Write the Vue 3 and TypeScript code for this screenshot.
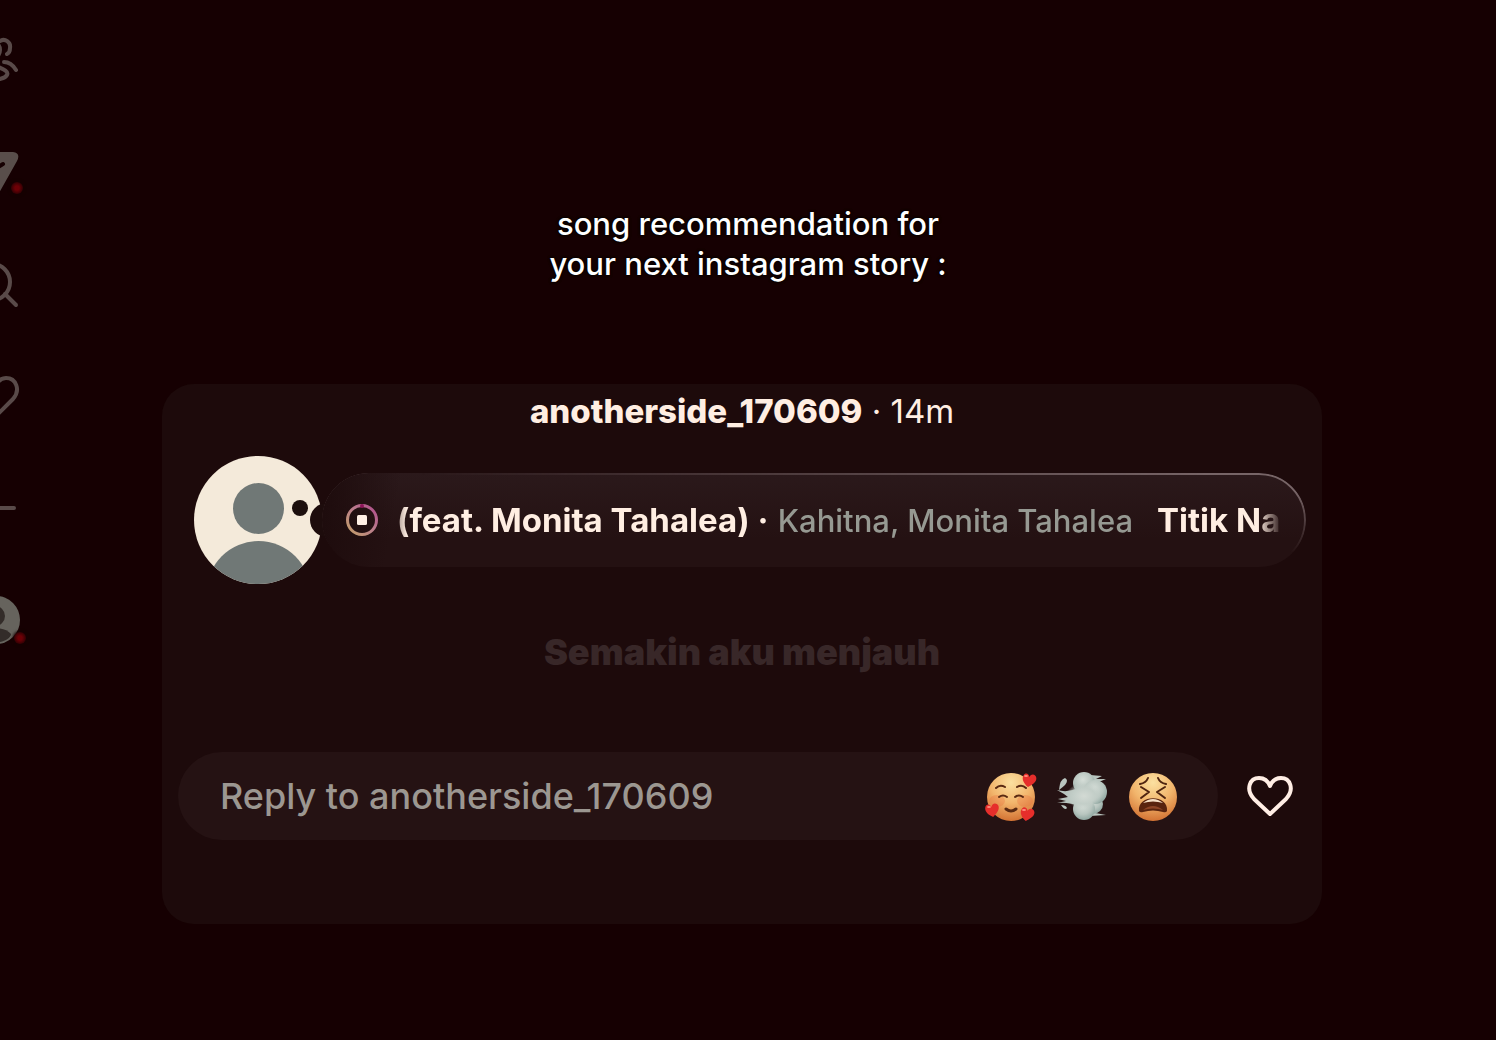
<script setup lang="ts">
import { ref } from 'vue'

const user = 'anotherside_170609'
const reply = ref('')
const liked = ref(false)
</script>

<template>
  <div class="page">
    <nav class="rail" aria-label="Main">
      <a href="#" class="rail-link" aria-label="Reels">
        <svg class="icon" viewBox="0 0 48 48">
          <path d="M28 5C33 2 39 6 38 12C38 15 37 17 35 18M25 7C29 11 29 17 25 21M32 26C37 26 41 29 44 34M24 30C31 33 37 35 35 39C33 43 29 42 24 44" />
        </svg>
      </a>
      <a href="#" class="rail-link" aria-label="Messages">
        <svg class="icon" viewBox="0 0 48 48">
          <path class="solid" d="M4 4H41Q49 5 45 13L27 45Q23 49 20 43L15 27L2 12Q0 5 4 4Z" />
          <path class="cut" d="M16 25L31 16" />
        </svg>
        <span class="dot"></span>
      </a>
      <a href="#" class="rail-link" aria-label="Search">
        <svg class="icon" viewBox="0 0 48 48">
          <circle cx="20" cy="22" r="18" />
          <path d="M33 34L44 45" />
        </svg>
      </a>
      <a href="#" class="rail-link" aria-label="Notifications">
        <svg class="icon" viewBox="0 0 48 48">
          <path d="M24 44L7 28C-3 17 4 6 14 6C19 6 22 9 24 13C26 9 29 6 34 6C44 6 49 18 41 27Z" />
        </svg>
      </a>
      <a href="#" class="rail-link" aria-label="Create">
        <svg class="icon" viewBox="0 0 48 48">
          <path d="M6 24H42M24 6V42" />
        </svg>
      </a>
      <a href="#" class="rail-link" aria-label="Profile">
        <svg class="icon" viewBox="0 0 48 48">
          <circle class="face" cx="24" cy="24" r="24" />
          <circle class="shade" cx="23" cy="20" r="10" />
          <path class="shade" d="M7 41C14 30 32 30 39 38C38 47 16 50 7 41Z" />
        </svg>
        <span class="dot low"></span>
      </a>
    </nav>

    <h1 class="caption">song recommendation for<br />your next instagram story :</h1>

    <main class="card">
      <header class="head"><strong>{{ user }}</strong> · 14m</header>

      <section class="note">
        <svg class="avatar" viewBox="0 0 128 128" role="img" aria-label="Profile picture">
          <defs>
            <clipPath id="disc"><circle cx="64" cy="64" r="64" /></clipPath>
          </defs>
          <g clip-path="url(#disc)">
            <rect width="128" height="128" fill="#f4eada" />
            <circle cx="64.500" cy="52.500" r="25.500" fill="#707876" />
            <circle cx="64.500" cy="137" r="52" fill="#707876" />
            <circle cx="106" cy="52" r="8" fill="#1c0f0d" />
          </g>
          <circle cx="133" cy="64" r="17" fill="#1d0c0c" />
        </svg>
        <div class="song">
          <svg class="stop" viewBox="0 0 34 34" aria-hidden="true">
            <defs>
              <linearGradient id="ring" x1="1" y1="0" x2="0" y2="1">
                <stop offset="0" stop-color="#b04a8c" />
                <stop offset=".45" stop-color="#ba7c8c" />
                <stop offset="1" stop-color="#c4a069" />
              </linearGradient>
            </defs>
            <circle cx="17" cy="17" r="14.500" fill="none" stroke="url(#ring)" stroke-width="3" />
            <circle cx="17" cy="3" r="2" fill="#8c1459" />
            <rect x="12" y="12" width="10" height="10" rx="1.500" fill="#ffefe4" />
          </svg>
          <div class="ticker">
            <span><strong>(feat. Monita Tahalea) ·</strong> <span class="artist">Kahitna, Monita Tahalea</span></span>
            <strong>Titik Na</strong>
          </div>
        </div>
      </section>

      <p class="lyric">Semakin aku menjauh</p>

      <form class="reply" @submit.prevent>
        <div class="field">
          <input v-model="reply" type="text" :placeholder="`Reply to ${user}`" :aria-label="`Reply to ${user}`" />
          <div class="reactions">
            <button type="button" aria-label="Smiling face with hearts">
              <svg class="emoji" viewBox="0 0 52 52">
                <defs>
                  <radialGradient id="warm" cx=".5" cy=".2" r=".85">
                    <stop offset="0" stop-color="#fbe0a0" />
                    <stop offset=".5" stop-color="#f2b56c" />
                    <stop offset="1" stop-color="#cf6a2c" />
                  </radialGradient>
                  <path id="mini" d="M0 7C-4 5-8 0-6-4C-5-7-1-7 0-3C1-7 6-7 7-3C8 1 3 5 0 7Z" />
                </defs>
                <circle cx="26" cy="27" r="24" fill="url(#warm)" />
                <ellipse cx="12" cy="31" rx="8" ry="6" fill="#e96a3d" opacity=".3" />
                <ellipse cx="40" cy="31" rx="8" ry="6" fill="#e96a3d" opacity=".3" />
                <g fill="none" stroke="#5a2a12" stroke-width="2" stroke-linecap="round">
                  <path d="M11 18Q15 14 20 17M32 17Q37 14 41 18M14 27Q18 24 22 27M30 27Q34 24 38 27" />
                  <path d="M21 39Q26 43 31 39" stroke-width="3" />
                </g>
                <g fill="#e62e2b">
                  <use href="#mini" transform="translate(44 10) rotate(8)" />
                  <use href="#mini" transform="translate(7 40) rotate(-10)" />
                  <use href="#mini" transform="translate(42 44) rotate(10)" />
                </g>
                <g fill="#ff8d7d">
                  <ellipse cx="41" cy="6" rx="2" ry="1" />
                  <ellipse cx="4" cy="37" rx="2" ry="1" />
                  <ellipse cx="39" cy="40" rx="2" ry="1" />
                </g>
              </svg>
            </button>
            <button type="button" aria-label="Dashing away">
              <svg class="emoji" viewBox="0 0 52 52">
                <defs>
                  <radialGradient id="lobe" cx=".45" cy=".35" r=".65">
                    <stop offset="0" stop-color="#d6ded8" />
                    <stop offset=".6" stop-color="#b9c6c0" />
                    <stop offset="1" stop-color="#8fa6a0" />
                  </radialGradient>
                  <radialGradient id="core">
                    <stop offset="0" stop-color="#d3dad4" />
                    <stop offset=".6" stop-color="#c3cec8" />
                    <stop offset="1" stop-color="#c3cec8" stop-opacity="0" />
                  </radialGradient>
                </defs>
                <g fill="#b9c5bf">
                  <path d="M34 5L46 6L40 9L50 9L38 14ZM34 42L50 45L34 46Z" />
                  <path d="M3 20Q4 9 9 8Q13 10 9 15Q7 17 3 20Z" />
                  <path d="M5 35Q10 35 11 38Q9 41 5 35Z" />
                  <path d="M1 20Q12 23 22 18L24 37Q14 32 1 33L10 31L2 29L12 27L8 24Z" />
                </g>
                <g fill="url(#lobe)">
                  <circle cx="28" cy="13" r="11" />
                  <circle cx="37" cy="34" r="10" />
                  <circle cx="39" cy="22" r="12" />
                  <circle cx="28" cy="39" r="11" />
                </g>
                <ellipse cx="28" cy="26" rx="18" ry="13" fill="url(#core)" />
              </svg>
            </button>
            <button type="button" aria-label="Tired face">
              <svg class="emoji" viewBox="0 0 52 52">
                <circle cx="26" cy="27" r="24" fill="url(#warm)" />
                <g fill="none" stroke="#4f2410" stroke-width="2" stroke-linecap="round" stroke-linejoin="round">
                  <path d="M13 14Q19 13 21 8M31 8Q33 13 39 14M14 17L22 22L14 28M38 17L30 22L38 28" />
                </g>
                <path d="M12 41C10 24 42 24 40 41Q39 43 36 42Q26 39 16 42Q13 43 12 41Z" fill="#59240f" />
                <path d="M16 33Q26 25 36 33Q26 30 16 33Z" fill="#f5dfc5" />
                <path d="M16 40Q26 32 36 40Q26 37 16 40Z" fill="#8d4526" />
              </svg>
            </button>
          </div>
        </div>
        <button type="button" class="like" aria-label="Like" :aria-pressed="liked" @click="liked = !liked">
          <svg viewBox="0 0 48 44">
            <path d="M24 40L8 25C-1 15 4 4 13 4C18 4 22 7 24 12C26 7 30 4 35 4C44 4 49 15 40 25Z" :fill="liked ? '#ffeee5' : 'none'" />
          </svg>
        </button>
      </form>
    </main>
  </div>
</template>

<style>
body {
  margin: 0;
  background: #160002;
}
</style>

<style scoped>
.page {
  display: grid;
  grid-template-columns: 162px minmax(0, 1fr) 174px;
  grid-template-rows: auto auto 1fr;
  min-height: 100vh;
  box-sizing: border-box;
  overflow: hidden;
  background: #160002;
  color: #ffeee2;
  font-family: Inter, "Liberation Sans", sans-serif;
}

button {
  padding: 0;
  border: 0;
  background: none;
  cursor: pointer;
}

svg {
  display: block;
}

.rail {
  grid-column: 1;
  grid-row: 1 / 4;
  justify-self: start;
  display: flex;
  flex-direction: column;
  gap: 64px;
  margin-left: -28px;
  padding-top: 36px;
}

.rail-link {
  position: relative;
  width: 48px;
  height: 48px;
}

.icon {
  width: 48px;
  height: 48px;
  fill: none;
  stroke: #594a49;
  stroke-width: 4;
  stroke-linecap: round;
  stroke-linejoin: round;
}

.icon .solid {
  fill: #594e4b;
  stroke: none;
}

.icon .cut {
  stroke: #160002;
}

.icon .face {
  fill: #66635d;
  stroke: none;
}

.icon .shade {
  fill: #332c29;
  stroke: none;
}

.dot {
  position: absolute;
  right: -3px;
  bottom: 2px;
  width: 12px;
  height: 12px;
  border-radius: 50%;
  background: radial-gradient(#6c0006 25%, #2c0003 75%);
  box-shadow: 0 0 3px 1px #160002;
}

.dot.low {
  right: -6px;
  bottom: 0;
}

.caption {
  grid-column: 1 / -1;
  grid-row: 1;
  margin: 204px 0 100px;
  color: #fff;
  font-size: 31px;
  font-weight: 500;
  line-height: 40px;
  text-align: center;
  text-shadow: 0 0 3px #000, 0 0 3px #000;
}

.card {
  grid-column: 2;
  grid-row: 2;
  padding: 8px 16px 84px;
  border-radius: 32px;
  background: #1d0a0b;
}

.head {
  font-size: 33px;
  line-height: 38px;
  text-align: center;
}

.head strong {
  font-weight: 800;
}

.note {
  display: flex;
  align-items: center;
  margin: 26px 0 0 16px;
}

.avatar {
  flex: none;
  width: 128px;
  height: 128px;
  overflow: visible;
}

.song {
  display: flex;
  align-items: center;
  flex: 1;
  min-width: 0;
  height: 94px;
  box-sizing: border-box;
  padding: 0 24px 0 23px;
  border-radius: 47px;
  background: linear-gradient(100deg, #1d0b0c, transparent 8%), linear-gradient(#2b191b, #241112 70%);
  position: relative;
}

.song::before {
  content: "";
  position: absolute;
  inset: 0;
  border: 2px solid #776567;
  border-radius: 47px;
  mask-image: linear-gradient(90deg, transparent 10%, #000 90%), linear-gradient(#000 20%, transparent 85%);
  mask-composite: intersect;
  pointer-events: none;
}

.stop {
  flex: none;
  width: 34px;
  height: 34px;
}

.ticker {
  display: flex;
  flex: 1;
  gap: 24px;
  min-width: 0;
  margin-left: 18px;
  overflow: hidden;
  font-size: 33px;
  line-height: 44px;
  white-space: nowrap;
  mask-image: linear-gradient(90deg, rgb(0 0 0 / 60%), #000 10px, #000 calc(100% - 24px), transparent);
}

.artist {
  color: #969992;
  font-size: 31px;
  font-weight: 500;
}

.lyric {
  margin: 44px 0 76px;
  color: #382728;
  font-size: 36px;
  font-weight: 900;
  line-height: 48px;
  text-align: center;
}

.reply {
  display: flex;
  align-items: center;
  gap: 28px;
}

.field {
  display: flex;
  align-items: center;
  flex: 1;
  min-width: 0;
  height: 88px;
  box-sizing: border-box;
  padding: 0 39px 0 42px;
  border-radius: 44px;
  background: #251213;
}

.field input {
  flex: 1;
  min-width: 0;
  height: 48px;
  padding: 0;
  border: 0;
  outline: 0;
  background: none;
  color: #ffeee2;
  font: 500 36px/48px Inter, "Liberation Sans", sans-serif;
}

.field input::placeholder {
  color: #9c9791;
  opacity: 1;
}

.reactions {
  display: flex;
  gap: 19px;
}

.emoji {
  width: 52px;
  height: 52px;
}

.like {
  margin-right: 12px;
}

.like svg {
  width: 48px;
  height: 44px;
  stroke: #ffeee5;
  stroke-width: 4;
  stroke-linejoin: round;
}
</style>
